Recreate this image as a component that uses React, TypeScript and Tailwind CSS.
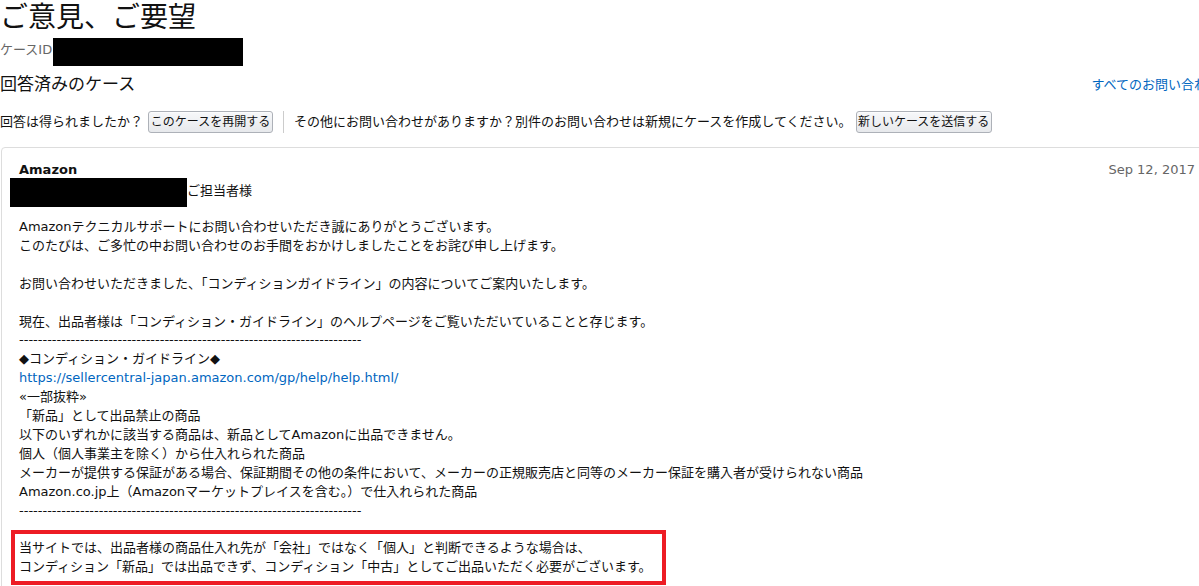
import React from 'react';

const FONT = { fontFamily: '"DejaVu Sans", "Noto Sans CJK JP", sans-serif' };

const DASHES = '-'.repeat(73);

const BODY: (string | { link: string } | null)[] = [
  'Amazonテクニカルサポートにお問い合わせいただき誠にありがとうございます。',
  'このたびは、ご多忙の中お問い合わせのお手間をおかけしましたことをお詫び申し上げます。',
  null,
  'お問い合わせいただきました、「コンディションガイドライン」の内容についてご案内いたします。',
  null,
  '現在、出品者様は「コンディション・ガイドライン」のヘルプページをご覧いただいていることと存じます。',
  DASHES,
  '◆コンディション・ガイドライン◆',
  { link: 'https://sellercentral-japan.amazon.com/gp/help/help.html/' },
  '«一部抜粋»',
  '「新品」として出品禁止の商品',
  '以下のいずれかに該当する商品は、新品としてAmazonに出品できません。',
  '個人（個人事業主を除く）から仕入れられた商品',
  'メーカーが提供する保証がある場合、保証期間その他の条件において、メーカーの正規販売店と同等のメーカー保証を購入者が受けられない商品',
  'Amazon.co.jp上（Amazonマーケットプレイスを含む。）で仕入れられた商品',
  DASHES,
  null,
];

function Btn({ children, w }: { children: React.ReactNode; w: string }) {
  return (
    <button
      className={`${w} h-[22px] shrink-0 flex items-center justify-center rounded-[3px] border border-[#adb1b8] bg-gradient-to-b from-[#f7f8fa] to-[#e7e9ec] text-[12px] text-[#111] shadow-[inset_0_1px_0_rgba(255,255,255,0.6)]`}
    >
      {children}
    </button>
  );
}

export default function App() {
  return (
    <div className="w-[1199px] h-[586px] overflow-hidden bg-white text-[#111]" style={FONT}>
      <div className="w-[1220px]">
        <h1 className="text-[28px] leading-[36px] font-normal">ご意見、ご要望</h1>
        <div className="mt-[2px] flex h-[28px] items-center">
          <span className="pb-[4px] text-[13px] text-[#666]">ケースID</span>
          <span className="ml-px h-[28px] w-[190px] bg-black" />
        </div>

        <div className="mt-[7px] flex h-[24px] items-center justify-between">
          <h2 className="text-[17px] font-normal">回答済みのケース</h2>
          <a className="text-[13px] text-[#0066c0]">すべてのお問い合わせ</a>
        </div>

        <div className="mt-[14px] flex h-[22px] items-center whitespace-nowrap text-[13px]">
          <span>回答は得られましたか？</span>
          <span className="ml-[5px]">
            <Btn w="w-[125px]">このケースを再開する</Btn>
          </span>
          <span className="mx-[10px] h-[22px] w-px bg-[#ccc]" />
          <span>その他にお問い合わせがありますか？別件のお問い合わせは新規にケースを作成してください。</span>
          <span className="ml-[4px]">
            <Btn w="w-[136px]">新しいケースを送信する</Btn>
          </span>
        </div>

        <div className="ml-px mt-[14px] rounded-tl-[4px] border border-[#ddd] pl-[17px] pr-[24px] pt-[13px] pb-4">
          <div className="flex justify-between">
            <span className="text-[13px] font-bold leading-[17px]">Amazon</span>
            <span className="text-[13px] leading-[17px] text-[#666]">Sep 12, 2017</span>
          </div>
          <div className="flex h-[29px] items-start">
            <span className="-ml-[9px] h-[29px] w-[177px] bg-black" />
            <span className="pt-[3px] text-[13px] leading-[19px]">ご担当者様</span>
          </div>

          <div className="mt-[11px] text-[13px] leading-[18.9px] whitespace-nowrap">
            {BODY.map((line, i) =>
              line === null ? (
                <div key={i} className="h-[18.9px]" />
              ) : typeof line === 'string' ? (
                <div key={i}>{line}</div>
              ) : (
                <div key={i}>
                  <a className="text-[#0066c0]">{line.link}</a>
                </div>
              ),
            )}
            <div className="relative">
              <span className="absolute -left-[8px] -top-[9px] h-[55px] w-[655px] border-4 border-[#ed1c24]" />
              <div>当サイトでは、出品者様の商品仕入れ先が「会社」ではなく「個人」と判断できるような場合は、</div>
              <div>コンディション「新品」では出品できず、コンディション「中古」としてご出品いただく必要がございます。</div>
            </div>
          </div>
        </div>
      </div>
    </div>
  );
}
